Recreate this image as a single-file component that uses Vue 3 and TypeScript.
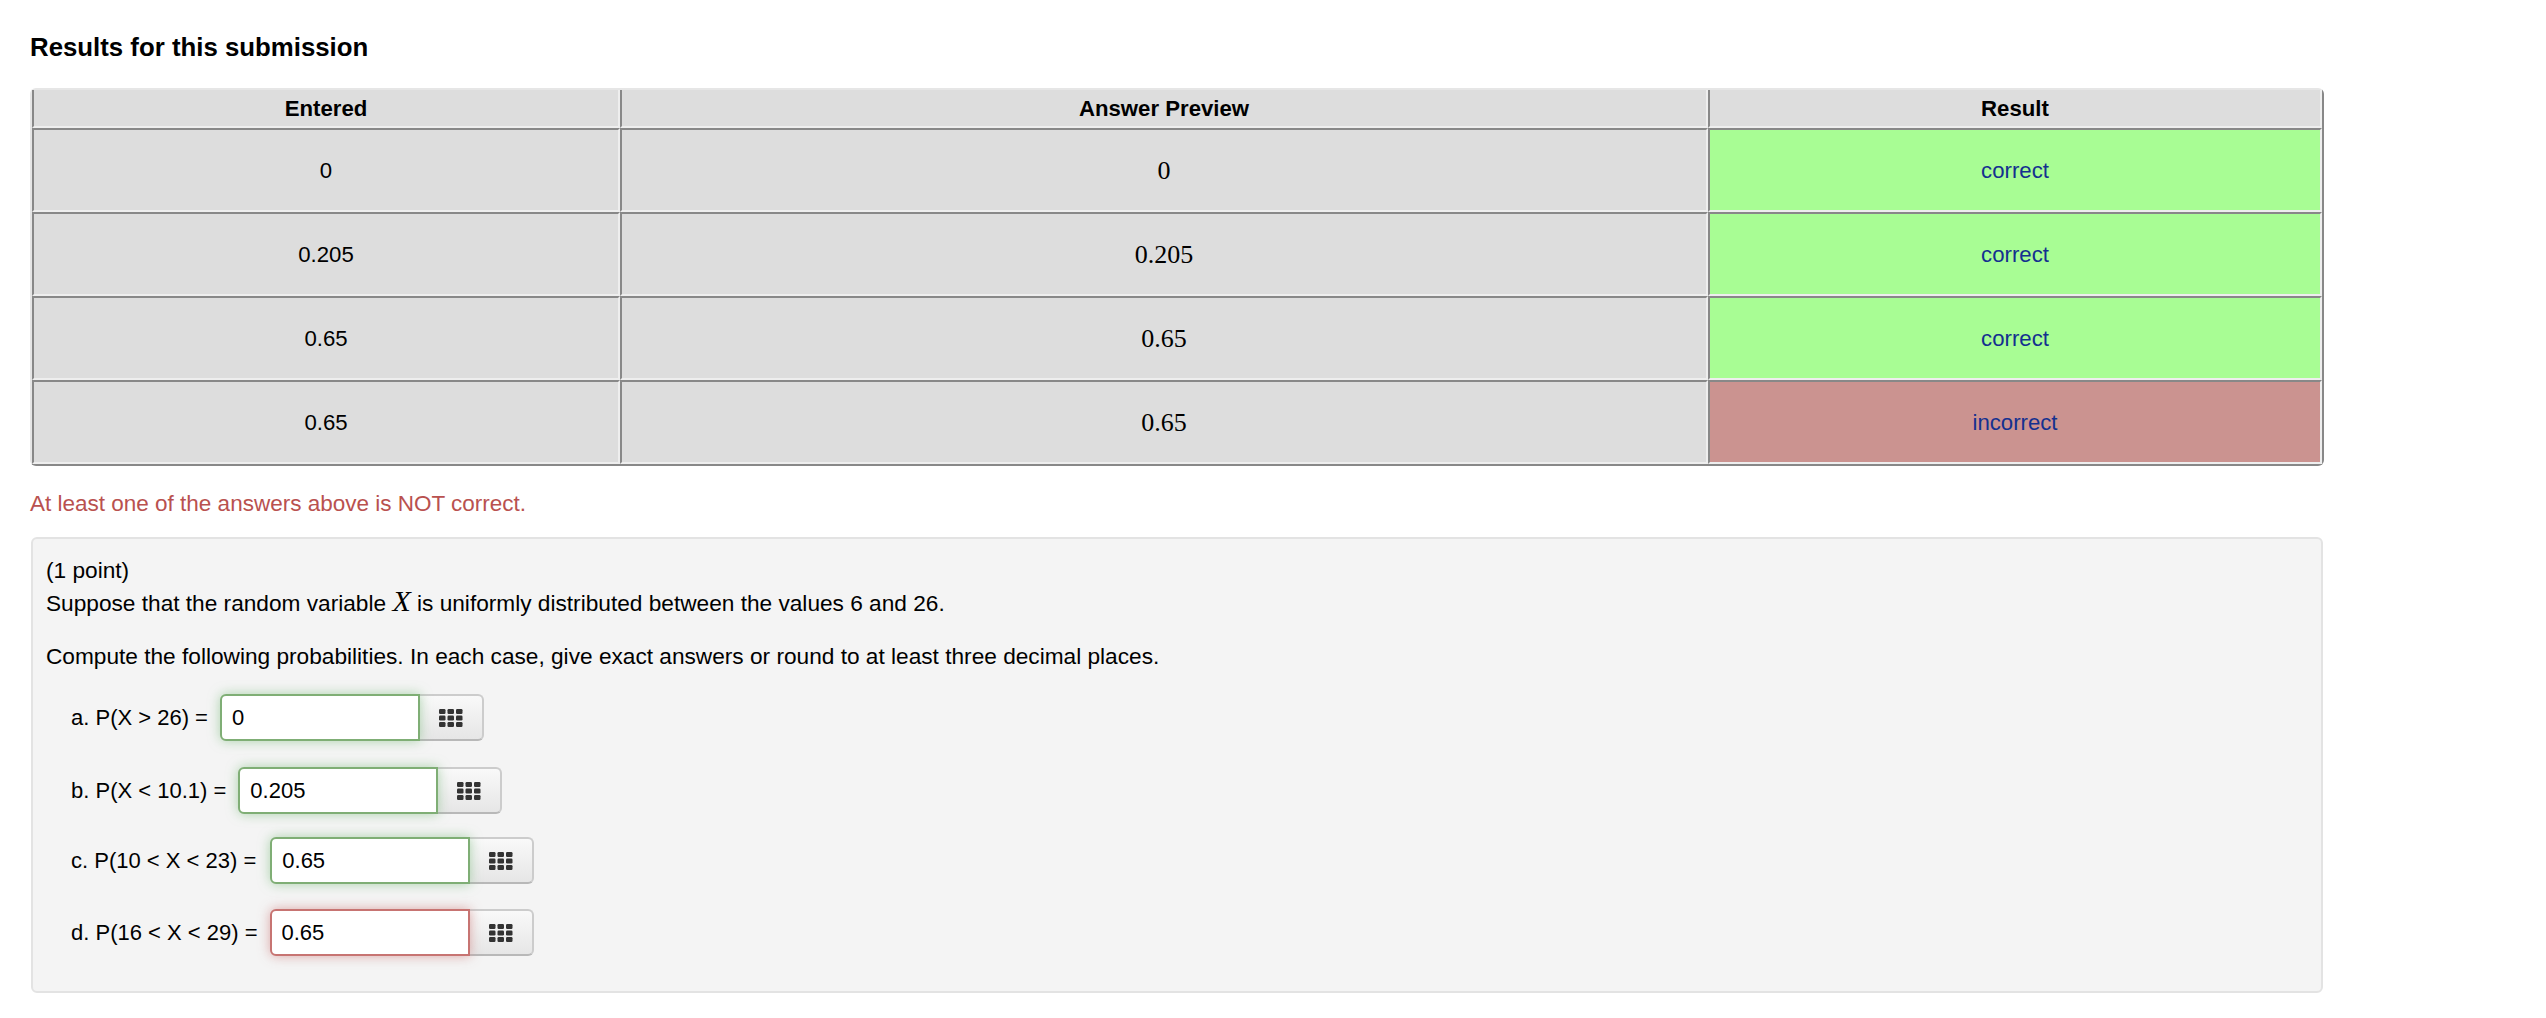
<script setup lang="ts">
interface Row {
  entered: string
  ok: boolean
}

interface Part {
  label: string
  value: string
  ok: boolean
  cls: string
}

const rows: Row[] = [
  { entered: '0', ok: true },
  { entered: '0.205', ok: true },
  { entered: '0.65', ok: true },
  { entered: '0.65', ok: false }
]

const parts: Part[] = [
  { label: 'a. P(X > 26) =', value: '0', ok: true, cls: 'part-a' },
  { label: 'b. P(X < 10.1) =', value: '0.205', ok: true, cls: 'part-b' },
  { label: 'c. P(10 < X < 23) =', value: '0.65', ok: true, cls: 'part-c' },
  { label: 'd. P(16 < X < 29) =', value: '0.65', ok: false, cls: 'part-d' }
]

const gridX = [0, 8.5, 17]
const gridY = [0, 6.5, 13]
</script>

<template>
  <div class="page">
    <h2 class="title">Results for this submission</h2>

    <table class="results">
      <colgroup>
        <col class="col-entered" />
        <col class="col-preview" />
        <col />
      </colgroup>
      <thead>
        <tr>
          <th>Entered</th>
          <th>Answer Preview</th>
          <th>Result</th>
        </tr>
      </thead>
      <tbody>
        <tr v-for="(row, i) in rows" :key="i">
          <td>{{ row.entered }}</td>
          <td class="preview">{{ row.entered }}</td>
          <td class="result" :class="row.ok ? 'good' : 'bad'">{{ row.ok ? 'correct' : 'incorrect' }}</td>
        </tr>
      </tbody>
    </table>

    <p class="alert">At least one of the answers above is NOT correct.</p>

    <div class="well">
      <div>(1 point)</div>
      <div>Suppose that the random variable <i class="math">X</i> is uniformly distributed between the values 6 and 26.</div>
      <div class="second">Compute the following probabilities. In each case, give exact answers or round to at least three decimal places.</div>

      <div v-for="part in parts" :key="part.cls" class="part" :class="part.cls">
        <span class="label">{{ part.label }}</span>
        <input class="answer" :class="part.ok ? 'ok' : 'wrong'" type="text" :value="part.value" />
        <button class="keypad" type="button" aria-label="Equation editor">
          <svg width="24" height="18" viewBox="0 0 24 18">
            <g fill="#333">
              <template v-for="y in gridY" :key="y">
                <rect v-for="x in gridX" :key="x" :x="x" :y="y" width="6.5" height="5" rx="1.2" />
              </template>
            </g>
          </svg>
        </button>
      </div>
    </div>
  </div>
</template>

<style scoped>
.page {
  width: 2324px;
  padding: 30px 0 0 30px;
  box-sizing: border-box;
  font-family: "Liberation Sans", Arial, sans-serif;
  color: #000;
}

.title {
  margin: 0;
  font-size: 25.8px;
  line-height: 34px;
  font-weight: 700;
}

.results {
  width: 2294px;
  margin: 24px 0 0;
  table-layout: fixed;
  border-collapse: separate;
  border-spacing: 0;
  border-style: solid;
  border-width: 2px;
  border-color: #e6e6e6 #888 #888 #e6e6e6;
  border-radius: 6px;
  background: #ddd;
  font-size: 22.2px;
}

.col-entered {
  width: 588px;
}

.col-preview {
  width: 1088px;
}

th,
td {
  box-sizing: border-box;
  padding: 2px 0 0;
  text-align: center;
  vertical-align: middle;
  background: #ddd;
  border-style: solid;
  border-width: 2px;
  border-color: #888 #eee #eee #888;
}

th {
  height: 38px;
  font-weight: 700;
  border-top-width: 0;
}

td {
  height: 84px;
}

.preview {
  font-family: "Liberation Serif", "Times New Roman", serif;
  font-size: 26px;
}

.result {
  color: #14308f;
}

.good {
  background: #a8fd94;
}

.bad {
  background: #cb9390;
}

.alert {
  margin: 0;
  padding-top: 22px;
  font-size: 22.5px;
  line-height: 32px;
  color: #b9514f;
}

.well {
  height: 456px;
  margin: 17px 1px 0;
  box-sizing: border-box;
  padding: 15px 13px 0;
  background: #f4f4f4;
  border: 2px solid #e3e3e3;
  border-radius: 6px;
  font-size: 22.67px;
  line-height: 33px;
}

.math {
  font-family: "Liberation Serif", "Times New Roman", serif;
  font-size: 30px;
  line-height: 0;
}

.second {
  margin-top: 20px;
}

.part {
  display: flex;
  align-items: center;
  margin-left: 25px;
}

.part-a {
  margin-top: 21px;
}

.part-b {
  margin-top: 26px;
}

.part-c {
  margin-top: 23px;
}

.part-d {
  margin-top: 25px;
}

.label {
  margin-right: 14px;
  font-size: 22px;
}

.part-a .label,
.part-b .label,
.part-d .label {
  margin-right: 12px;
}

.answer {
  z-index: 1;
  width: 200px;
  height: 47px;
  box-sizing: border-box;
  padding: 0 10px;
  border: 2px solid;
  border-radius: 6px 0 0 6px;
  background: #fff;
  font-family: inherit;
  font-size: 22px;
  color: #000;
  outline: none;
}

.ok {
  border-color: #7fae75;
  box-shadow: 0 0 12px rgba(122, 186, 123, 0.6);
}

.wrong {
  border-color: #c77472;
  box-shadow: 0 0 12px rgba(213, 147, 146, 0.8);
}

.keypad {
  display: flex;
  align-items: center;
  justify-content: center;
  width: 64px;
  height: 47px;
  padding: 0;
  border: 2px solid #ccc;
  border-bottom-color: #b8b8b8;
  border-left: 0;
  border-radius: 0 6px 6px 0;
  background: linear-gradient(#f9f9f9, #e6e6e6);
}
</style>
